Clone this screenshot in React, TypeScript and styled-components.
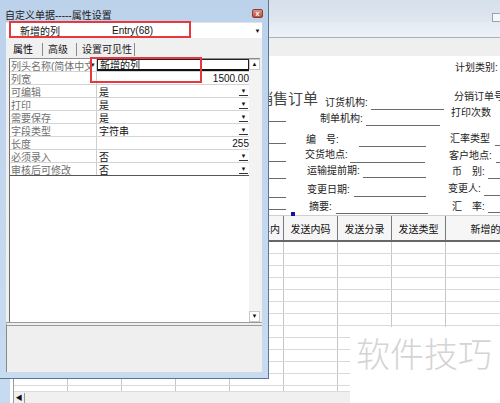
import React from "react";
import styled, { createGlobalStyle } from "styled-components";

const GlobalStyle = createGlobalStyle`
  html, body {
    margin: 0;
    padding: 0;
    background: #fff;
  }
  body {
    font-family: "Liberation Sans", "Noto Sans CJK SC", sans-serif;
    font-size: 10px;
    color: #111;
  }
`;

// 背景窗体
const Screen = styled.div`
  position: relative;
  width: 500px;
  height: 403px;
  overflow: hidden;
`;

const MainWindow = styled.div`
  display: flex;
  flex-direction: column;
  height: 100%;
`;

const MainTitle = styled.div`
  height: 22px;
  flex-shrink: 0;
  display: flex;
  justify-content: flex-end;
  align-items: flex-end;
  background: linear-gradient(#d6e0eb, #dfe7f0);
`;

const TinyBtn = styled.div`
  width: 9px;
  height: 7px;
  margin-right: -3px;
  border: 1px solid #9aa3ad;
  background: #f7f7f7;
`;

const MainBand = styled.div`
  height: 15px;
  flex-shrink: 0;
  background: linear-gradient(#e3eaf3, #edf2f8);
  border-bottom: 1px solid #a9b2bc;
`;

const Toolbar = styled.div`
  height: 18px;
  flex-shrink: 0;
  background: #efefef;
`;

const MainBody = styled.div`
  flex: 1;
  min-height: 0;
  display: flex;
`;

const LeftEdge = styled.div`
  width: 10px;
  flex-shrink: 0;
  background: #c6dbf1;
`;

const Sheet = styled.div`
  flex: 1;
  min-width: 0;
  display: flex;
  flex-direction: column;
  padding-left: 3px;
  background: #fff;
  overflow: hidden;
`;

// 单据设计画布, 字段位置即内容
const FormCanvas = styled.div`
  position: relative;
  height: 159px;
  flex-shrink: 0;
`;

const Field = styled.div`
  position: absolute;
  white-space: pre;
  line-height: 14px;
  color: #222;
`;

const Rule = styled.div`
  position: absolute;
  height: 1px;
  background: #6a6a6a;
`;

const BillTitle = styled.div`
  position: absolute;
  font-size: 15px;
  line-height: 18px;
  color: #444;
`;

const Handle = styled.div`
  position: absolute;
  width: 4px;
  height: 4px;
  background: #1414a0;
`;

const Grid = styled.div`
  flex: 1;
  min-height: 0;
  display: flex;
  flex-direction: column;
  border-left: 1px solid #9a9a9a;
`;

const HeaderRow = styled.div`
  display: flex;
  height: 27px;
  flex-shrink: 0;
  box-sizing: border-box;
  border-top: 1px solid #cfcfcf;
  border-bottom: 2px solid #676767;
  background: #f6f6f6;
`;

const HeadCell = styled.div<{ $w: number; $right?: boolean }>`
  width: ${(p) => p.$w}px;
  flex-shrink: 0;
  box-sizing: border-box;
  border-right: 1px solid #7a7a7a;
  display: flex;
  align-items: center;
  justify-content: ${(p) => (p.$right ? "flex-end" : "center")};
  padding-right: ${(p) => (p.$right ? 3 : 0)}px;
  white-space: nowrap;
  overflow: hidden;
`;

const GridBody = styled.div`
  flex: 1;
  min-height: 0;
  overflow: hidden;
`;

const BodyRow = styled.div`
  display: flex;
  height: 12px;
  box-sizing: border-box;
  border-bottom: 1px solid #d9d9d9;
`;

const BodyCell = styled.div<{ $w: number }>`
  width: ${(p) => p.$w}px;
  flex-shrink: 0;
  box-sizing: border-box;
  border-right: 1px solid #c6c6c6;
`;

const HScroll = styled.div`
  height: 11px;
  flex-shrink: 0;
  display: flex;
  align-items: center;
  background: #f0f0f0;
  border-top: 1px solid #dcdcdc;
`;

const HArrow = styled.div`
  width: 11px;
  height: 10px;
  box-sizing: border-box;
  border-right: 1px solid #9a9a9a;
  font-size: 7px;
  line-height: 10px;
  text-align: center;
  color: #111;
`;

// 属性设置对话框
const Dialog = styled.div`
  position: absolute;
  left: 0;
  top: 0;
  width: 269px;
  height: 379px;
  box-sizing: border-box;
  display: flex;
  flex-direction: column;
  background: linear-gradient(#bcd2eb, #c8dbf0);
  border-right: 1px solid #5b7590;
  border-bottom: 1px solid #5b7590;
`;

const DlgTitle = styled.div`
  height: 22px;
  flex-shrink: 0;
  box-sizing: border-box;
  padding: 6px 5px 0 5px;
  display: flex;
  align-items: center;
  justify-content: space-between;
  color: #1a1a1a;
`;

const CloseBtn = styled.div`
  width: 11px;
  height: 9px;
  margin-top: -2px;
  box-sizing: border-box;
  border: 1px solid #8c3b31;
  border-radius: 2px;
  background: linear-gradient(#dc9285, #bf4f3f);
  color: #fff;
  font-size: 7px;
  line-height: 7px;
  text-align: center;
  font-weight: bold;
`;

const DlgClient = styled.div`
  flex: 1;
  min-height: 0;
  margin: 0 6px 6px 6px;
  display: flex;
  flex-direction: column;
  background: #f0f0f0;
`;

const Combo = styled.div`
  height: 16px;
  flex-shrink: 0;
  box-sizing: border-box;
  display: flex;
  align-items: center;
  background: #fff;
  border-top: 1px solid #e2e2e2;
`;

const ComboName = styled.span`
  width: 92px;
  padding-left: 14px;
  flex-shrink: 0;
`;

const ComboArrow = styled.span`
  margin-left: auto;
  width: 9px;
  font-size: 6px;
  text-align: center;
`;

const Tabs = styled.div`
  height: 16px;
  flex-shrink: 0;
  margin-top: 3px;
  padding-left: 2px;
  display: flex;
  align-items: center;
`;

const Tab = styled.div<{ $w: number; $active?: boolean }>`
  width: ${(p) => p.$w}px;
  height: 13px;
  box-sizing: border-box;
  padding-left: 5px;
  line-height: 13px;
  white-space: nowrap;
  border-right: 1px solid #8a8a8a;
  color: ${(p) => (p.$active ? "#000" : "#1a1a1a")};
`;

const PropPanel = styled.div`
  flex: 1;
  min-height: 0;
  margin: 1px 2px 0 3px;
  display: flex;
  background: #fff;
  border-left: 1px solid #6d6d6d;
  border-top: 1px solid #8c8c8c;
`;

const PropList = styled.div`
  flex: 1;
  min-width: 0;
  display: flex;
  flex-direction: column;
`;

const PropRow = styled.div<{ $last?: boolean }>`
  display: flex;
  height: 13px;
  flex-shrink: 0;
  box-sizing: border-box;
  border-bottom: ${(p) => (p.$last ? "1px solid #555" : "1px solid #d4d4d4")};
`;

const PropLabel = styled.div`
  width: 87px;
  flex-shrink: 0;
  box-sizing: border-box;
  padding-left: 1px;
  display: flex;
  align-items: center;
  border-right: 1px solid #cdcdcd;
  color: #707070;
  white-space: nowrap;
  overflow: hidden;
`;

const LabelText = styled.span`
  overflow: hidden;
  flex: 1;
  min-width: 0;
`;

const Marker = styled.span`
  font-size: 7px;
  color: #222;
  padding: 0 1px;
`;

const PropValue = styled.div<{ $right?: boolean; $editing?: boolean }>`
  flex: 1;
  min-width: 0;
  box-sizing: border-box;
  display: flex;
  align-items: center;
  justify-content: ${(p) => (p.$right ? "flex-end" : "flex-start")};
  padding-left: 2px;
  color: #111;
  border: ${(p) => (p.$editing ? "1px solid #222" : "none")};
  border-bottom: ${(p) => (p.$editing ? "2px solid #111" : "none")};
`;

const DropBtn = styled.div`
  margin-left: auto;
  width: 9px;
  height: 10px;
  margin-right: 1px;
  box-sizing: border-box;
  border-bottom: 1px solid #333;
  font-size: 6px;
  line-height: 10px;
  text-align: center;
`;

const VScroll = styled.div`
  width: 11px;
  flex-shrink: 0;
  display: flex;
  flex-direction: column;
  justify-content: space-between;
  background: #f3f3f3;
`;

const ScrollBtn = styled.div`
  height: 11px;
  box-sizing: border-box;
  background: #fff;
  border: 1px solid #c9c9c9;
  font-size: 6px;
  line-height: 9px;
  text-align: center;
`;

const BottomPanel = styled.div`
  height: 50px;
  flex-shrink: 0;
  box-sizing: border-box;
  background: #efefef;
  border-top: 4px double #9a9a9a;
  border-left: 1px solid #8a8a8a;
`;

// 标注与水印
const Mark = styled.div`
  position: absolute;
  box-sizing: border-box;
  border: 2px solid #e6383e;
`;

const Watermark = styled.div`
  position: absolute;
  left: 350px;
  top: 327px;
  width: 150px;
  height: 76px;
  box-sizing: border-box;
  padding: 2px 0 0 6px;
  background: #fff;
  font-family: "Noto Sans CJK SC", sans-serif;
  font-size: 34px;
  font-weight: 300;
  line-height: 48px;
  color: #d4d4d4;
  white-space: nowrap;
`;

const OX = 10;
const OY = 56;

type FieldDef = [string, number, number, number, number, number];

const fields: FieldDef[] = [
  ["订货机构:", 322, 103, 368, 441, 109],
  ["制单机构:", 317, 119, 363, 437, 125],
  ["编　号:", 303, 140, 356, 423, 146],
  ["交货地点:", 302, 155, 347, 422, 162],
  ["运输提前期:", 304, 171, 360, 423, 177],
  ["变更日期:", 304, 190, 351, 423, 196],
  ["摘要:", 306, 207, 333, 425, 213],
  ["计划类别:", 452, 68, 498, 540, 74],
  ["分销订单号", 451, 97, 0, 0, 0],
  ["打印次数", 448, 113, 497, 540, 119],
  ["汇率类型", 447, 139, 492, 540, 145],
  ["客户地点:", 446, 156, 493, 540, 162],
  ["币　别:", 449, 172, 485, 540, 178],
  ["变更人:", 445, 189, 481, 540, 195],
  ["汇　率:", 449, 207, 485, 540, 212],
];

const leftLines = [121, 143, 161, 178, 197, 209];

const columns = [
  { title: "行号", w: 54 },
  { title: "物料代码", w: 54 },
  { title: "物料名称", w: 54 },
  { title: "规格型号", w: 54 },
  { title: "源单内", w: 54, right: true },
  { title: "发送内码", w: 54 },
  { title: "发送分录", w: 54 },
  { title: "发送类型", w: 54 },
  { title: "新增的列", w: 90 },
];

const props = [
  { label: "列头名称(简体中文)", value: "新增的列", editing: true, marker: true },
  { label: "列宽", value: "1500.00", right: true },
  { label: "可编辑", value: "是", drop: true },
  { label: "打印", value: "是", drop: true },
  { label: "需要保存", value: "是", drop: true },
  { label: "字段类型", value: "字符串", drop: true },
  { label: "长度", value: "255", right: true },
  { label: "必须录入", value: "否", drop: true },
  { label: "审核后可修改", value: "否", drop: true },
];

const App: React.FC = () => {
  const rows = Array.from({ length: 14 });

  return (
    <Screen>
      <GlobalStyle />
      <MainWindow>
        <MainTitle>
          <TinyBtn />
        </MainTitle>
        <MainBand />
        <Toolbar />
        <MainBody>
          <LeftEdge />
          <Sheet>
            <FormCanvas>
              <BillTitle style={{ left: 255 - OX, top: 90 - OY }}>销售订单</BillTitle>
              {fields.map(([label, lx, cy, l1, l2, ly]) => (
                <React.Fragment key={label}>
                  <Field style={{ left: lx - OX, top: cy - 7 - OY }}>{label}</Field>
                  {l2 > 0 && (
                    <Rule style={{ left: l1 - OX, top: ly - OY, width: l2 - l1 }} />
                  )}
                </React.Fragment>
              ))}
              {leftLines.map((y) => (
                <Rule key={y} style={{ left: 240 - OX, top: y - OY, width: 43 }} />
              ))}
              <Handle style={{ left: 288 - OX, top: 212 - OY }} />
            </FormCanvas>
            <Grid>
              <HeaderRow>
                {columns.map((c) => (
                  <HeadCell key={c.title} $w={c.w} $right={c.right}>
                    {c.title}
                  </HeadCell>
                ))}
              </HeaderRow>
              <GridBody>
                {rows.map((_, i) => (
                  <BodyRow key={i}>
                    {columns.map((c) => (
                      <BodyCell key={c.title} $w={c.w} />
                    ))}
                  </BodyRow>
                ))}
              </GridBody>
              <HScroll>
                <HArrow>◀</HArrow>
              </HScroll>
            </Grid>
          </Sheet>
        </MainBody>
      </MainWindow>

      <Dialog>
        <DlgTitle>
          <span>自定义单据-----属性设置</span>
          <CloseBtn>x</CloseBtn>
        </DlgTitle>
        <DlgClient>
          <Combo>
            <ComboName>新增的列</ComboName>
            <span>Entry(68)</span>
            <ComboArrow>▼</ComboArrow>
          </Combo>
          <Tabs>
            <Tab $w={35} $active>属性</Tab>
            <Tab $w={34}>高级</Tab>
            <Tab $w={58}>设置可见性</Tab>
          </Tabs>
          <PropPanel>
            <PropList>
              {props.map((p, i) => (
                <PropRow key={p.label} $last={i === props.length - 1}>
                  <PropLabel>
                    <LabelText>{p.label}</LabelText>
                    {p.marker && <Marker>▾</Marker>}
                  </PropLabel>
                  <PropValue $right={p.right} $editing={p.editing}>
                    {p.value}
                    {p.drop && <DropBtn>▼</DropBtn>}
                  </PropValue>
                </PropRow>
              ))}
            </PropList>
            <VScroll>
              <ScrollBtn>▲</ScrollBtn>
              <ScrollBtn>▼</ScrollBtn>
            </VScroll>
          </PropPanel>
          <BottomPanel />
        </DlgClient>
      </Dialog>

      <Mark style={{ left: 9, top: 21, width: 182, height: 17 }} />
      <Mark style={{ left: 90, top: 57, width: 112, height: 26 }} />
      <Watermark>软件技巧</Watermark>
    </Screen>
  );
};

export default App;
